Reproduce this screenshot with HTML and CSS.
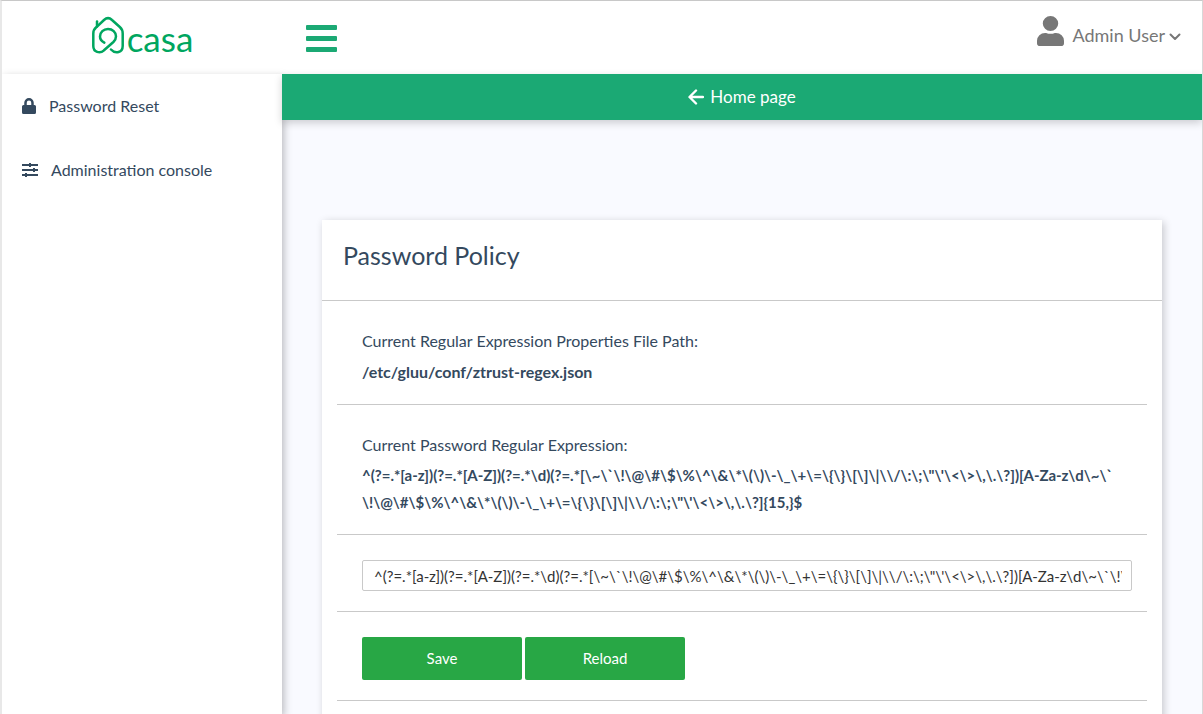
FILE: index.html
```html
<!DOCTYPE html>
<html lang="en">
<head>
<meta charset="utf-8">
<meta name="viewport" content="width=device-width, initial-scale=1">
<title>Casa - Password Policy</title>
<link rel="stylesheet" href="styles.css">
</head>
<body>
<div class="page">
  <header class="topbar">
    <div class="brand">
      <a class="logo" href="#" aria-label="casa">
        <svg class="logo-mark" width="34" height="38" viewBox="0 0 34 38" fill="none" stroke="currentColor" stroke-width="2.5" stroke-linecap="round" stroke-linejoin="round" aria-hidden="true">
          <path d="M13.300 26.700C10.500 25.200 9 23 9 20.500C9 16.300 12.500 13 17 13C21.500 13 25 16.300 25 20.300C25 22.800 24 24.500 22.400 26L13 34.300C9 38 2.300 36.300 2.300 30V17.500C2.300 14.500 3.200 13 5.200 11.300L13 4C15.600 1.600 18.500 1.600 21 4L28.800 11C30.800 12.800 31.700 14.500 31.700 17.500V30C31.700 36.500 24.500 38.500 20 33.500"/>
          <path d="M6 10.500V5.500"/>
        </svg>
        <span class="logo-text">casa</span>
      </a>
    </div>
    <button class="menu-toggle" type="button" aria-label="Toggle menu">
      <span class="bar"></span><span class="bar"></span><span class="bar"></span>
    </button>
    <button class="user-menu" type="button">
      <svg width="27" height="30" viewBox="0 0 448 512" preserveAspectRatio="none" fill="currentColor" aria-hidden="true"><path d="M224 256A128 128 0 1 0 224 0a128 128 0 0 0 0 256zm90 32h-17a174 174 0 0 1-146 0h-17A134 134 0 0 0 0 422v42a48 48 0 0 0 48 48h352a48 48 0 0 0 48-48v-42a134 134 0 0 0-134-134z"/></svg>
      <span class="user-name">Admin User</span>
      <svg class="chevron" width="12" height="8" viewBox="0 0 12 8" fill="none" stroke="currentColor" stroke-width="2" stroke-linecap="round" stroke-linejoin="round" aria-hidden="true"><path d="M1.500 1.500L6 6L10.500 1.500"/></svg>
    </button>
  </header>
  <div class="columns">
    <nav class="sidebar">
      <a class="nav-item" href="#">
        <svg width="14" height="16" viewBox="0 0 448 512" fill="currentColor" aria-hidden="true"><path d="M400 224h-24v-72a152 152 0 0 0-304 0v72H48a48 48 0 0 0-48 48v192a48 48 0 0 0 48 48h352a48 48 0 0 0 48-48V272a48 48 0 0 0-48-48zm-104 0H152v-72a72 72 0 0 1 144 0z"/></svg>
        <span class="nav-text">Password Reset</span>
      </a>
      <a class="nav-item" href="#">
        <svg width="16" height="14" viewBox="0 0 16 14" fill="currentColor" aria-hidden="true"><path d="M0 1h16v2H0zM7 0h2v4H7zM0 6h16v2H0zM11 5h2v4h-2zM0 11h16v2H0zM3 10h2v4H3z"/></svg>
        <span class="nav-text">Administration console</span>
      </a>
    </nav>
    <main class="content">
      <div class="home-bar">
        <a class="home-link" href="#">
          <svg width="16" height="16" viewBox="0 0 16 16" fill="none" stroke="currentColor" stroke-width="2.400" stroke-linecap="round" stroke-linejoin="round" aria-hidden="true"><path d="M8 1.500L1.500 8L8 14.500M2 8H15"/></svg>
          <span class="nav-text">Home page</span>
        </a>
      </div>
      <section class="card">
        <h1 class="card-title">Password Policy</h1>
        <form class="card-body">
          <div class="row row-path">
            <p class="label">Current Regular Expression Properties File Path:</p>
            <p class="value">/etc/gluu/conf/ztrust-regex.json</p>
          </div>
          <div class="row">
            <p class="label">Current Password Regular Expression:</p>
            <p class="value value-regex">^(?=.*[a-z])(?=.*[A-Z])(?=.*\d)(?=.*[\~\`\!\@\#\$\%\^\&amp;\*\(\)\-\_\+\=\{\}\[\]\|\\/\:\;\"\'\&lt;\&gt;\,\.\?])[A-Za-z\d\~\`<wbr>\!\@\#\$\%\^\&amp;\*\(\)\-\_\+\=\{\}\[\]\|\\/\:\;\"\'\&lt;\&gt;\,\.\?]{15,}$</p>
          </div>
          <div class="row row-input">
            <input class="regex" type="text" aria-label="Password regular expression" value="^(?=.*[a-z])(?=.*[A-Z])(?=.*\d)(?=.*[\~\`\!\@\#\$\%\^\&amp;\*\(\)\-\_\+\=\{\}\[\]\|\\/\:\;\&quot;\'\&lt;\&gt;\,\.\?])[A-Za-z\d\~\`\!\@\#\$\%\^\&amp;\*\(\)\-\_\+\=\{\}\[\]\|\\/\:\;\&quot;\'\&lt;\&gt;\,\.\?]{15,}$">
          </div>
          <div class="row row-actions">
            <button class="btn" type="button">Save</button>
            <button class="btn" type="button">Reload</button>
          </div>
        </form>
      </section>
    </main>
  </div>
</div>
</body>
</html>
```

FILE: styles.css
```css
* {
  box-sizing: border-box;
}

body {
  margin: 0;
  font-family: Lato, "Liberation Sans", sans-serif;
  font-size: 16px;
  color: #34495e;
  background: #f9faff;
}

a {
  color: inherit;
  text-decoration: none;
}

button {
  font-family: inherit;
  border: 0;
  cursor: pointer;
}

.page {
  display: flex;
  flex-direction: column;
  height: 100vh;
  overflow: hidden;
  border-top: 1px solid #c8c8c8;
  border-left: 2px solid #e8e8e8;
  border-right: 1px solid #d8d8d8;
}

.topbar {
  display: flex;
  flex: none;
  height: 73px;
  padding-right: 21px;
  background: #fff;
}

.brand {
  display: flex;
  justify-content: center;
  width: 280px;
  padding-top: 15px;
}

.logo {
  display: flex;
  color: #00a65f;
}

.logo-text {
  padding-left: 2px;
  font-size: 35px;
  line-height: 44px;
}

.menu-toggle {
  display: flex;
  flex-direction: column;
  gap: 6px;
  margin-left: 24px;
  padding: 24px 0 0;
  background: none;
}

.bar {
  width: 31px;
  height: 5px;
  border-radius: 1px;
  background: #1ba974;
}

.user-menu {
  display: flex;
  align-items: center;
  align-self: flex-start;
  gap: 4px;
  margin-left: auto;
  padding: 15px 0 0;
  background: none;
  color: #777;
  font-size: 18px;
}

.user-name {
  padding: 7px 0 0 4px;
}

.chevron {
  margin-top: 12px;
}

.columns {
  display: flex;
  flex: 1;
  min-height: 0;
}

.sidebar {
  z-index: 1;
  width: 280px;
  flex: none;
  padding-top: 16px;
  background: #fff;
  box-shadow: 2px 3px 8px rgba(0, 0, 0, 0.26);
}

.nav-item {
  display: flex;
  align-items: center;
  gap: 13px;
  height: 32px;
  margin-bottom: 32px;
  padding-left: 20px;
}

.nav-text {
  padding-bottom: 2px;
}

.content {
  flex: 1;
  min-width: 0;
  background: #f9faff;
}

.home-bar {
  position: relative;
  z-index: 2;
  display: flex;
  align-items: center;
  justify-content: center;
  height: 46px;
  background: #1ba974;
  box-shadow: 0 3px 8px rgba(0, 0, 0, 0.18);
}

.home-link {
  display: flex;
  align-items: center;
  gap: 6px;
  color: #fff;
  font-size: 17px;
}

.card {
  margin: 100px 40px 0;
  background: #fff;
  box-shadow: 2px 2px 8px rgba(0, 0, 0, 0.2);
}

.card-title {
  height: 81px;
  margin: 0;
  padding: 19px 21px 0;
  border-bottom: 1px solid #c9c9c9;
  font-size: 25px;
  font-weight: 400;
  line-height: 32px;
}

.card-body {
  padding: 0 15px 40px;
}

.row {
  padding: 26px 25px 18px;
  border-bottom: 1px solid #c9c9c9;
}

.row-path {
  padding-bottom: 19px;
}

.label,
.value {
  margin: 0;
  line-height: 27px;
}

.value {
  padding-top: 4px;
  font-weight: 700;
}

.value-regex {
  font-size: 15px;
}

.row-input {
  padding: 25px 15px 20px 25px;
}

.regex {
  display: block;
  width: 100%;
  height: 31px;
  padding: 0 9px 0 11px;
  border: 1px solid #c9c9c9;
  border-radius: 2px;
  background: #fff;
  color: #333;
  font-family: inherit;
  font-size: 15px;
}

.row-actions {
  display: flex;
  gap: 3px;
  padding: 25px 25px 20px;
}

.btn {
  width: 160px;
  height: 43px;
  padding: 0 0 2px;
  border-radius: 2px;
  background: #28a745;
  color: #fff;
  font-size: 15px;
}
```
